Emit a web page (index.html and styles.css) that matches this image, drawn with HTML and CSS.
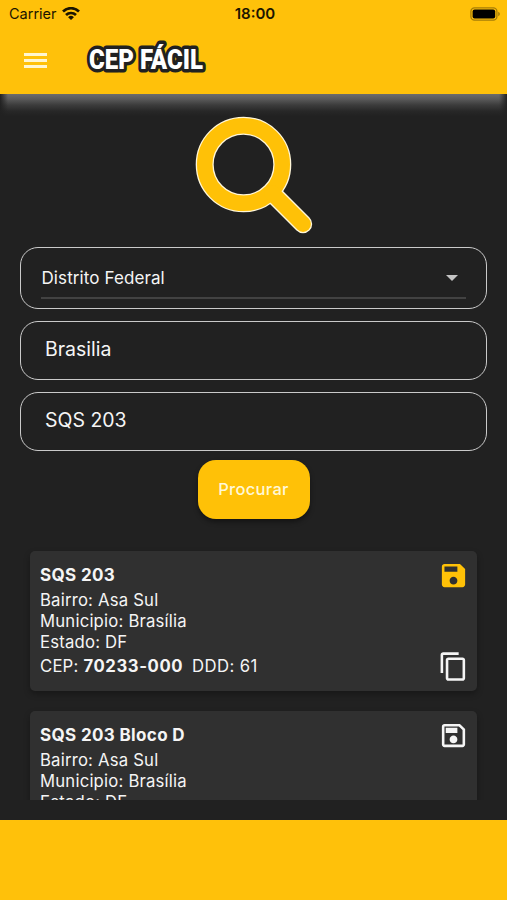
FILE: index.html
```html
<!DOCTYPE html>
<html lang="pt-BR">
  <head>
    <meta charset="UTF-8" />
    <meta name="viewport" content="width=device-width, initial-scale=1.0" />
    <title>CEP Fácil</title>
    <link rel="stylesheet" href="styles.css">
  </head>
  <body>
    <header class="header">
      <div class="status-bar">
        <div class="carrier">
          <span>Carrier</span>
          <svg class="wifi" viewBox="0 0 18 14" fill="none" stroke="#1c1500" stroke-width="2.7">
            <path d="M1 4.4a11.6 11.6 0 0 1 16 0" />
            <path d="M4 8a7.2 7.2 0 0 1 10 0" />
            <path d="M9 13 6.1 10.2a4.2 4.2 0 0 1 5.8 0z" fill="#1c1500" stroke="none" />
          </svg>
        </div>
        <span class="clock">18:00</span>
        <svg class="battery" viewBox="0 0 31 14">
          <rect x="0.9" y="0.8" width="26" height="12.4" rx="3.6" fill="none" stroke="#a67d08" stroke-width="1.3" />
          <rect x="2.6" y="2.5" width="22.6" height="9" rx="2" fill="#000" />
          <path d="M28.2 4.8c2.2.8 2.2 3.6 0 4.4z" fill="#a67d08" />
        </svg>
      </div>
      <div class="toolbar">
        <div class="menu"><i></i><i></i><i></i></div>
        <svg class="logo" viewBox="0 0 126 40">
          <text x="6" y="29" textLength="114" lengthAdjust="spacingAndGlyphs">CEP FÁCIL</text>
        </svg>
      </div>
    </header>

    <main class="content">
      <svg class="search-icon" viewBox="0 0 120 120">
        <g fill="none" stroke="#fff6d8" stroke-linecap="round">
          <circle cx="49.5" cy="49.5" r="38.8" stroke-width="18" />
          <path d="M78 78l31 31" stroke-width="18.4" />
        </g>
        <g fill="none" stroke="#ffc107" stroke-linecap="round">
          <circle cx="49.5" cy="49.5" r="38.8" stroke-width="15.4" />
          <path d="M78 78l31 31" stroke-width="15.8" />
        </g>
      </svg>

      <form class="form">
        <div class="field select">
          <div class="select-inner">
            <span>Distrito Federal</span>
            <i class="arrow"></i>
          </div>
        </div>
        <div class="field">Brasilia</div>
        <div class="field">SQS 203</div>
        <button class="submit" type="button">Procurar</button>
      </form>

      <div class="results">
        <div class="card">
          <div class="info">
            <h3>SQS 203</h3>
            <p>Bairro: Asa Sul</p>
            <p>Municipio: Brasília</p>
            <p>Estado: DF</p>
            <p class="cep">CEP: <b>70233-000</b><span>DDD: 61</span></p>
          </div>
          <div class="actions">
            <svg class="saved" viewBox="0 0 24 24"><path d="M17 3H5c-1.11 0-2 .9-2 2v14c0 1.1.89 2 2 2h14c1.1 0 2-.9 2-2V7l-4-4zm-5 16c-1.66 0-3-1.34-3-3s1.34-3 3-3 3 1.34 3 3-1.34 3-3 3zm3-10H5V5h10v4z" /></svg>
            <svg viewBox="0 0 24 24"><path d="M16 1H4c-1.1 0-2 .9-2 2v14h2V3h12V1zm3 4H8c-1.1 0-2 .9-2 2v14c0 1.1.9 2 2 2h11c1.1 0 2-.9 2-2V7c0-1.1-.9-2-2-2zm0 16H8V7h11v14z" /></svg>
          </div>
        </div>
        <div class="card">
          <div class="info">
            <h3>SQS 203 Bloco D</h3>
            <p>Bairro: Asa Sul</p>
            <p>Municipio: Brasília</p>
            <p>Estado: DF</p>
          </div>
          <div class="actions">
            <svg viewBox="0 0 24 24"><path d="M17 3H5c-1.11 0-2 .9-2 2v14c0 1.1.89 2 2 2h14c1.1 0 2-.9 2-2V7l-4-4zm2 16H5V5h11.17L19 7.83V19zm-7-7c-1.66 0-3 1.34-3 3s1.34 3 3 3 3-1.34 3-3-1.34-3-3-3zM6 6h9v4H6z" /></svg>
          </div>
        </div>
      </div>
    </main>

    <footer class="footer"></footer>
  </body>
</html>
```

FILE: styles.css
```css
* {
  box-sizing: border-box;
}
body {
  margin: 0;
  height: 900px;
  display: flex;
  flex-direction: column;
  overflow: hidden;
  background: #212121;
  color: #f5f5f5;
  font-family: Inter, "Liberation Sans", sans-serif;
}
.header {
  height: 94px;
  flex: none;
  background: #ffc10a;
}
.status-bar {
  display: grid;
  grid-template-columns: 1fr auto 1fr;
  align-items: center;
  height: 27px;
  padding: 0 6px 0 9px;
  color: #1c1500;
  font-size: 14.5px;
}
.carrier {
  display: flex;
  align-items: center;
  gap: 5px;
}
.wifi {
  width: 18px;
  height: 14px;
}
.clock {
  font-weight: 600;
  font-size: 15px;
}
.battery {
  width: 31px;
  height: 14px;
  justify-self: end;
}
.toolbar {
  display: flex;
  align-items: center;
  height: 66px;
  padding-left: 24px;
}
.menu {
  display: flex;
  flex-direction: column;
  gap: 3px;
  width: 22.5px;
}
.menu i {
  height: 3px;
  background: #fff6d0;
}
.logo {
  width: 126px;
  height: 40px;
  margin-left: 36px;
  overflow: visible;
}
.logo text {
  font-family: Roboto, sans-serif;
  font-weight: 900;
  font-size: 28px;
  fill: #fff;
  stroke: #212121;
  stroke-width: 7px;
  stroke-linejoin: round;
  paint-order: stroke;
}
.content {
  flex: 1;
  min-height: 0;
  display: flex;
  flex-direction: column;
  padding: 21px 20px 19.5px;
  background:
    linear-gradient(90deg, #212121, transparent 8px, transparent calc(100% - 8px), #212121) no-repeat,
    linear-gradient(#6c6c6c 0, #5a5a5a 5px, #3c3c3c 11px, #282828 17px, #212121 22px) no-repeat;
}
.search-icon {
  width: 120px;
  height: 120px;
  flex: none;
  margin-left: 173.5px;
}
.form {
  display: flex;
  flex-direction: column;
  gap: 12px;
  margin-top: 12px;
}
.field {
  display: flex;
  align-items: center;
  height: 59px;
  padding: 0 24px 2px;
  border: 1.5px solid #cacaca;
  border-radius: 18px;
  font-size: 19.5px;
}
.select {
  height: 61.5px;
  padding: 0 20px;
  font-size: 17px;
  letter-spacing: 0.1px;
}
.select-inner {
  flex: 1;
  display: flex;
  align-items: center;
  justify-content: space-between;
  height: 40px;
  margin-top: 2px;
  padding: 0 8px 0 0.5px;
  border-bottom: 2px solid #424242;
}
.arrow {
  border: 6px solid transparent;
  border-top: 6.5px solid #c4c4c4;
  border-bottom: 0;
}
.submit {
  align-self: center;
  width: 112px;
  height: 59px;
  margin-top: -2.5px;
  padding: 0 6px 1px;
  border: 0;
  border-radius: 18px;
  background: #ffc107;
  box-shadow: 0 3px 5px rgba(0, 0, 0, 0.4);
  color: #fff8d8;
  font-family: inherit;
  font-size: 16.5px;
  font-weight: 500;
  letter-spacing: 0.3px;
}
.results {
  flex: 1;
  min-height: 0;
  margin-top: 12px;
  padding: 20px 10px 0;
  overflow: hidden;
}
.card {
  display: flex;
  justify-content: space-between;
  height: 140px;
  margin-bottom: 20px;
  padding: 9px 8.5px 9px 10px;
  border-radius: 5px;
  background: #303030;
  box-shadow: 0 3px 6px rgba(0, 0, 0, 0.3);
  font-size: 16.7px;
  letter-spacing: 0.2px;
}
.card h3 {
  margin: 3px 0;
  font-size: 17px;
  line-height: 24px;
  font-weight: 700;
  letter-spacing: 0.35px;
}
.card p {
  margin: 0;
  line-height: 20.8px;
}
.card .cep {
  margin-top: 4px;
}
.cep b {
  letter-spacing: 0.6px;
}
.cep span {
  margin-left: 9px;
  letter-spacing: 0.4px;
}
.actions {
  display: flex;
  flex-direction: column;
  justify-content: space-between;
}
.actions svg {
  width: 31px;
  height: 31px;
  fill: #f5f5f5;
}
.actions .saved {
  fill: #ffc107;
}
.footer {
  height: 80.5px;
  flex: none;
  background: #ffc10a;
}
```
